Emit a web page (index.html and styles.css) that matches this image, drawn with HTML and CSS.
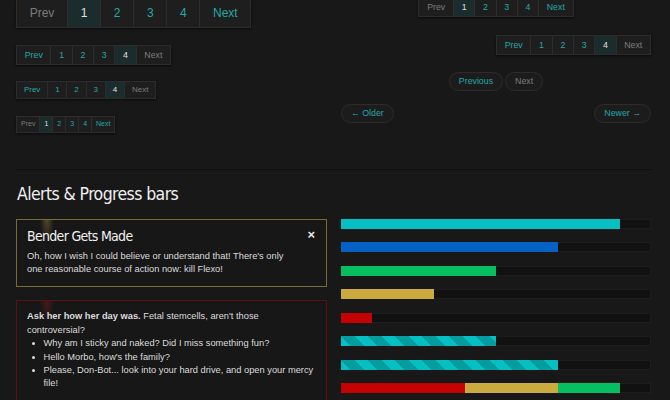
FILE: index.html
```html
<!DOCTYPE html>
<html>
<head>
<meta charset="utf-8">
<link rel="stylesheet" href="styles.css">
</head>
<body>
<div class="page">
  <div class="grid top">
    <div class="col left">
      <ul class="pag lg">
        <li class="off"><span>Prev</span></li>
        <li class="on"><span>1</span></li>
        <li><a>2</a></li>
        <li><a>3</a></li>
        <li><a>4</a></li>
        <li><a>Next</a></li>
      </ul>
      <ul class="pag md m17">
        <li><a>Prev</a></li>
        <li><a>1</a></li>
        <li><a>2</a></li>
        <li><a>3</a></li>
        <li class="on"><span>4</span></li>
        <li class="off"><span>Next</span></li>
      </ul>
      <ul class="pag sm m16">
        <li><a>Prev</a></li>
        <li><a>1</a></li>
        <li><a>2</a></li>
        <li><a>3</a></li>
        <li class="on"><span>4</span></li>
        <li class="off"><span>Next</span></li>
      </ul>
      <ul class="pag xs m17">
        <li class="off"><span>Prev</span></li>
        <li class="on"><span>1</span></li>
        <li><a>2</a></li>
        <li><a>3</a></li>
        <li><a>4</a></li>
        <li><a>Next</a></li>
      </ul>
    </div>
    <div class="col right">
      <div class="center">
        <ul class="pag md">
          <li class="off"><span>Prev</span></li>
          <li class="on"><span>1</span></li>
          <li><a>2</a></li>
          <li><a>3</a></li>
          <li><a>4</a></li>
          <li><a>Next</a></li>
        </ul>
      </div>
      <div class="end m18">
        <ul class="pag md">
          <li><a>Prev</a></li>
          <li><a>1</a></li>
          <li><a>2</a></li>
          <li><a>3</a></li>
          <li class="on"><span>4</span></li>
          <li class="off"><span>Next</span></li>
        </ul>
      </div>
      <div class="pager center m17">
        <a class="pill">Previous</a>
        <span class="pill off">Next</span>
      </div>
      <div class="pager split m13">
        <a class="pill">&larr; Older</a>
        <a class="pill">Newer &rarr;</a>
      </div>
    </div>
  </div>

  <hr class="rule">
  <h2 class="section-title">Alerts &amp; Progress bars</h2>

  <div class="grid">
    <div class="col">
      <div class="alert warn">
        <span class="close">&times;</span>
        <h4 class="alert-title">Bender Gets Made</h4>
        <p>Oh, how I wish I could believe or understand that! There's only one reasonable course of action now: kill Flexo!</p>
      </div>
      <div class="alert error">
        <p><strong>Ask her how her day was.</strong> Fetal stemcells, aren't those controversial?</p>
        <ul class="list">
          <li>Why am I sticky and naked? Did I miss something fun?</li>
          <li>Hello Morbo, how's the family?</li>
          <li>Please, Don-Bot... look into your hard drive, and open your mercy file!</li>
        </ul>
      </div>
    </div>
    <div class="col bars">
      <div class="progress"><div class="bar cyan" style="width:90%"></div></div>
      <div class="progress"><div class="bar blue" style="width:70%"></div></div>
      <div class="progress"><div class="bar green" style="width:50%"></div></div>
      <div class="progress"><div class="bar yellow" style="width:30%"></div></div>
      <div class="progress"><div class="bar red" style="width:10%"></div></div>
      <div class="progress"><div class="bar cyan striped" style="width:50%"></div></div>
      <div class="progress"><div class="bar cyan striped" style="width:70%"></div></div>
      <div class="progress"><div class="bar red" style="width:40%"></div><div class="bar yellow" style="width:30%"></div><div class="bar green" style="width:20%"></div></div>
    </div>
  </div>
</div>
</body>
</html>
```
FILE: styles.css
```css
* { box-sizing: border-box; }
html, body { margin: 0; padding: 0; }
body {
  background: #181818;
  color: #dcdcdc;
  font-family: "Liberation Sans", Arial, sans-serif;
  font-size: 9.3px;
  line-height: 13.4px;
  overflow: hidden;
  height: 400px;
}
.page {
  padding: 0 18px 0 16px;
  margin-top: -3px;
}
.grid {
  display: grid;
  grid-template-columns: 311px 310px;
  column-gap: 14px;
}
.col { display: flex; flex-direction: column; align-items: flex-start; }
.col.left { padding-top: 1px; }
.col.right { align-items: stretch; }
.center { display: flex; justify-content: center; }
.end { display: flex; justify-content: flex-end; }

.pag {
  display: flex;
  list-style: none;
  margin: 0;
  padding: 0;
  box-shadow: 0 1px 2px rgba(0,0,0,0.6);
}
.pag li a, .pag li span {
  display: block;
  background: #1e1e1e;
  border: 1px solid #2c2c2c;
  border-left-width: 0;
  color: #25a7a7;
}
.pag li:first-child a, .pag li:first-child span { border-left-width: 1px; }
.pag li.off span { color: #7c7c7c; }
.pag li.on span { background: #1b2c2d; color: #e0e0e0; }

.pag.lg a, .pag.lg span { font-size: 12px; line-height: 14px; padding: 7px 12.7px; }
.pag.md a, .pag.md span { font-size: 8.8px; line-height: 12px; padding: 3px 7.7px; }
.pag.sm a, .pag.sm span { font-size: 8px; line-height: 12px; padding: 2px 6.9px; }
.pag.xs a, .pag.xs span { font-size: 7px; line-height: 14.5px; padding: 0 4px; }

.pager { display: flex; gap: 2px; }
.pager.split { justify-content: space-between; }
.pill {
  display: block;
  font-size: 8.8px;
  line-height: 17px;
  padding: 0 9px;
  border: 1px solid #2c2c2c;
  border-radius: 10px;
  background: #1c1c1c;
  color: #25a7a7;
}
.pill.off { color: #7c7c7c; }

.rule {
  border: 0;
  border-top: 1px solid #0f0f0f;
  margin: 36px 0 0 0;
  width: 636px;
}
.section-title {
  font-family: "Liberation Sans Narrow", "DejaVu Sans Condensed", sans-serif;
  font-weight: normal;
  font-size: 17.5px;
  letter-spacing: -0.6px;
  line-height: 22px;
  margin: 13px 0 0 1px;
  color: #f0f0f0;
  height: 36px;
}

.alert {
  position: relative;
  width: 311px;
  padding: 9px 30px 10px 10px;
  border: 1px solid #7a6a33;
  background: #171717;
  margin-bottom: 13px;
}
.alert.warn {
  background: radial-gradient(ellipse 7px 22px at 30px 0, rgba(190,160,80,0.35), rgba(190,160,80,0) 100%), #171717;
}
.alert.error {
  padding-right: 10px;
  border-color: #5c1010;
  background: radial-gradient(ellipse 7px 22px at 30px 0, rgba(160,30,30,0.35), rgba(160,30,30,0) 100%), #171717;
}
.alert p { margin: 0; }
.alert-title {
  font-family: "Liberation Sans Narrow", "DejaVu Sans Condensed", sans-serif;
  font-weight: normal;
  font-size: 14px;
  letter-spacing: -0.7px;
  line-height: 14px;
  margin: 0 0 7px 0;
  color: #f2f2f2;
}
.close {
  position: absolute;
  top: 8px;
  right: 11px;
  font-size: 13px;
  font-weight: bold;
  line-height: 13px;
  color: #e8e8e8;
}
.list {
  margin: 0 0 0 16.5px;
  padding: 0;
}

.bars { align-items: stretch; }
.progress {
  display: flex;
  height: 10px;
  margin-bottom: 13.5px;
  background: #111;
  box-shadow: inset 0 0 0 1px #1d1d1d;
}
.bar { height: 10px; }
.cyan { background-color: #05bfc2; }
.blue { background-color: #0561c3; }
.green { background-color: #05bf60; }
.yellow { background-color: #cbab3d; }
.red { background-color: #c40202; }
.striped {
  background-image: linear-gradient(45deg, rgba(0,0,0,0.18) 25%, transparent 25%, transparent 50%, rgba(0,0,0,0.18) 50%, rgba(0,0,0,0.18) 75%, transparent 75%, transparent);
  background-size: 27px 27px;
}

.m13 { margin-top: 13px; }
.m16 { margin-top: 16px; }
.m17 { margin-top: 17px; }
.m18 { margin-top: 18px; }
```
